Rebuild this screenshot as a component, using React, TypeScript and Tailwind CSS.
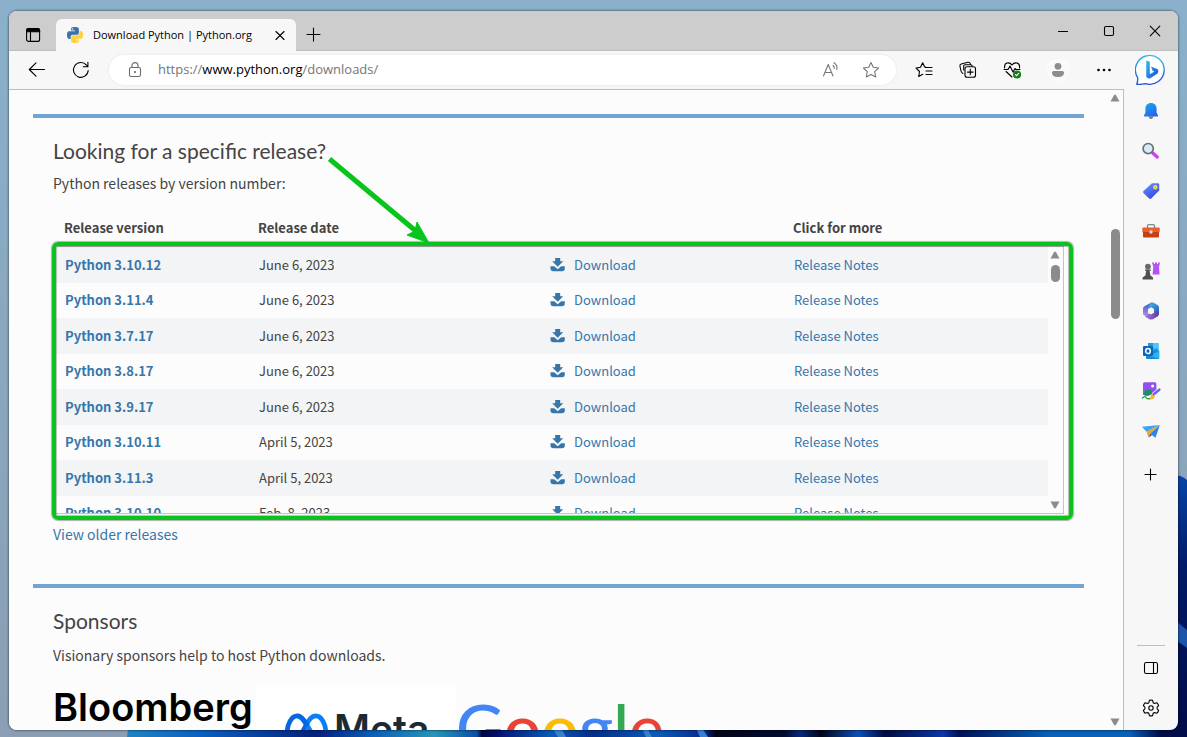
import React from 'react';
import { clsx } from 'clsx';

const releases = [
  { version: 'Python 3.10.12', date: 'June 6, 2023' },
  { version: 'Python 3.11.4', date: 'June 6, 2023' },
  { version: 'Python 3.7.17', date: 'June 6, 2023' },
  { version: 'Python 3.8.17', date: 'June 6, 2023' },
  { version: 'Python 3.9.17', date: 'June 6, 2023' },
  { version: 'Python 3.10.11', date: 'April 5, 2023' },
  { version: 'Python 3.11.3', date: 'April 5, 2023' },
  { version: 'Python 3.10.10', date: 'Feb. 8, 2023' },
];

const COLUMNS = 'grid grid-cols-[194fr_292fr_243fr_265fr] items-center';

/* ---------- Desktop behind the window ---------- */

const Wallpaper: React.FC = () => (
  <svg
    className="absolute inset-0 w-full h-full"
    viewBox="0 0 1187 737"
    preserveAspectRatio="none"
    aria-hidden="true"
  >
    <defs>
      <linearGradient id="sky" x1="0" y1="0" x2="0" y2="1">
        <stop offset="0" stopColor="#8ab0cb" />
        <stop offset="1" stopColor="#8a9fb3" />
      </linearGradient>
      <linearGradient id="bloom" x1="127" x2="1187" y1="0" y2="0" gradientUnits="userSpaceOnUse">
        <stop offset="0" stopColor="#1f84c6" />
        <stop offset="0.07" stopColor="#0a5fc0" />
        <stop offset="0.18" stopColor="#04207c" />
        <stop offset="0.23" stopColor="#0a5cb8" />
        <stop offset="0.29" stopColor="#2896b8" />
        <stop offset="0.33" stopColor="#0b4fa8" />
        <stop offset="0.335" stopColor="#020640" />
        <stop offset="0.35" stopColor="#041070" />
        <stop offset="0.4" stopColor="#0a5cb8" />
        <stop offset="0.44" stopColor="#032c88" />
        <stop offset="0.5" stopColor="#0a5cb8" />
        <stop offset="0.545" stopColor="#082a8c" />
        <stop offset="0.555" stopColor="#020518" />
        <stop offset="0.62" stopColor="#020a30" />
        <stop offset="0.635" stopColor="#072878" />
        <stop offset="0.655" stopColor="#020518" />
        <stop offset="0.69" stopColor="#0c50b8" />
        <stop offset="0.715" stopColor="#020a40" />
        <stop offset="0.77" stopColor="#0a38a8" />
        <stop offset="0.785" stopColor="#021058" />
        <stop offset="0.87" stopColor="#0862b8" />
        <stop offset="0.945" stopColor="#0862b8" />
        <stop offset="0.975" stopColor="#020c48" />
        <stop offset="1" stopColor="#020c48" />
      </linearGradient>
      <linearGradient id="petal" x1="0" y1="0" x2="0" y2="1">
        <stop offset="0" stopColor="#0845a8" />
        <stop offset="0.35" stopColor="#021a68" />
        <stop offset="1" stopColor="#020c48" />
      </linearGradient>
    </defs>
    <rect width="1187" height="737" fill="url(#sky)" />
    <path d="M127 737Q127 731 130 725H1187V737Z" fill="url(#bloom)" />
    <path d="M1170 474Q1182 475 1187 480V737H1170Z" fill="url(#petal)" />
    <path d="M1170 616L1187 630V648L1170 636Z" fill="#1d55ac" />
    <path d="M552 728L558 737H566L561 728ZM642 728L646 737H652L647 728ZM696 728L700 737H708L702 728Z" fill="#3a7fd0" />
  </svg>
);

/* ---------- Browser icons ---------- */

const PythonIcon: React.FC = () => (
  <svg className="w-4 h-4 shrink-0" viewBox="0 0 24 24" aria-hidden="true">
    <path
      fill="#3a73a5"
      d="M14.25.18l.9.2.73.26.59.3.45.32.34.34.25.34.16.33.1.3.04.26.02.2-.01.13V8.5l-.05.63-.13.55-.21.46-.26.38-.3.31-.33.25-.35.19-.35.14-.33.1-.3.07-.26.04-.21.02H8.77l-.69.05-.59.14-.5.22-.41.27-.33.32-.27.35-.2.36-.15.37-.1.35-.07.32-.04.27-.02.21v3.06H3.17l-.21-.03-.28-.07-.32-.12-.35-.18-.36-.26-.36-.36-.35-.46-.32-.59-.28-.73-.21-.88-.14-1.05-.05-1.23.06-1.22.16-1.04.24-.87.32-.71.36-.57.4-.44.42-.33.42-.24.4-.16.36-.1.32-.05.24-.01h.16l.06.01h8.16v-.83H6.18l-.01-2.75-.02-.37.05-.34.11-.31.17-.28.25-.26.31-.23.38-.2.44-.18.51-.15.58-.12.64-.1.71-.06.77-.04.84-.02 1.27.05zm-6.3 1.98l-.23.33-.08.41.08.41.23.34.33.22.41.09.41-.09.33-.22.23-.34.08-.41-.08-.41-.23-.33-.33-.22-.41-.09-.41.09z"
    />
    <path
      fill="#ffd03f"
      d="M21.1 6.11l.28.06.32.12.35.18.36.27.36.35.35.47.32.59.28.73.21.88.14 1.04.05 1.23-.06 1.23-.16 1.04-.24.86-.32.71-.36.57-.4.45-.42.33-.42.24-.4.16-.36.09-.32.05-.24.02-.16-.01h-8.22v.82h5.84l.01 2.76.02.36-.05.34-.11.31-.17.29-.25.25-.31.24-.38.2-.44.17-.51.15-.58.13-.64.09-.71.07-.77.04-.84.01-1.27-.04-1.07-.14-.9-.2-.73-.25-.59-.3-.45-.33-.34-.34-.25-.34-.16-.33-.1-.3-.04-.25-.02-.2.01-.13v-5.34l.05-.64.13-.54.21-.46.26-.38.3-.32.33-.24.35-.2.35-.14.33-.1.3-.06.26-.04.21-.02.13-.01h5.84l.69-.05.59-.14.5-.21.41-.28.33-.32.27-.35.2-.36.15-.36.1-.35.07-.32.04-.28.02-.21V6.07h2.09l.14.01zm-6.47 14.25l-.23.33-.08.41.08.41.23.33.33.23.41.08.41-.08.33-.23.23-.33.08-.41-.08-.41-.23-.33-.33-.23-.41-.08-.41.08z"
    />
  </svg>
);

const Line: React.FC<{ size?: string; children: React.ReactNode; className?: string }> = ({
  size = '0 0 20 20',
  children,
  className = 'w-5 h-5',
}) => (
  <svg
    className={className}
    viewBox={size}
    fill="none"
    stroke="currentColor"
    strokeWidth="1.1"
    strokeLinecap="round"
    strokeLinejoin="round"
    aria-hidden="true"
  >
    {children}
  </svg>
);

const BingIcon: React.FC = () => (
  <svg className="w-8 h-8" viewBox="0 0 32 32" aria-hidden="true">
    <defs>
      <linearGradient id="bingRing" x1="0" y1="0" x2="0" y2="1">
        <stop offset="0" stopColor="#2bbdf0" />
        <stop offset="1" stopColor="#2250cf" />
      </linearGradient>
      <linearGradient id="bingB" x1="0" y1="0" x2="1" y2="1">
        <stop offset="0" stopColor="#2fc0f4" />
        <stop offset="1" stopColor="#1c48dc" />
      </linearGradient>
    </defs>
    <path
      d="M1.8 30.2Q3 27 2.6 23.5A14.4 14.4 0 1 1 10.5 29.6Q6 30.8 1.8 30.2Z"
      fill="#fff"
      stroke="url(#bingRing)"
      strokeWidth="1.4"
      strokeLinejoin="round"
    />
    <path d="M11.2 6.500L14.800 7.800V20.200L19.400 17.600L17.400 16.600L16 12.600L22.800 15.200Q24.400 17.400 22.600 19.600L14.800 24.600Q11.200 24.800 11.200 21.600Z" fill="url(#bingB)" />
  </svg>
);

const BellIcon: React.FC = () => (
  <svg className="w-5 h-5" viewBox="0 0 20 20" aria-hidden="true">
    <defs>
      <linearGradient id="bell" x1="0" y1="0" x2="0.6" y2="1">
        <stop offset="0" stopColor="#14aee8" />
        <stop offset="1" stopColor="#2b62ee" />
      </linearGradient>
    </defs>
    <path d="M7.6 15.6H12.4Q12 18 10 18T7.6 15.6Z" fill="#6d7278" />
    <path d="M10 2C6.6 2 4.4 4.4 4.4 7.6V11.4L3 14.400Q2.8 15.6 3.8 15.6H16.2Q17.2 15.6 17 14.4L15.6 11.4V7.6C15.6 4.4 13.4 2 10 2Z" fill="url(#bell)" />
  </svg>
);

const SearchIcon: React.FC = () => (
  <svg className="w-5 h-5" viewBox="0 0 20 20" aria-hidden="true">
    <path d="M12 12.3L16.200 16" stroke="#c344f2" strokeWidth="3.4" strokeLinecap="round" />
    <circle cx="7.200" cy="7.600" r="5.1" fill="#d4ebfb" stroke="#6a6e73" strokeWidth="1.700" />
  </svg>
);

const TagIcon: React.FC = () => (
  <svg className="w-5 h-5" viewBox="0 0 20 20" aria-hidden="true">
    <defs>
      <linearGradient id="tag" x1="0" y1="0" x2="0.6" y2="1">
        <stop offset="0" stopColor="#5aa0fa" />
        <stop offset="1" stopColor="#3d45e8" />
      </linearGradient>
    </defs>
    <path d="M11 2.3L17 2.2Q18.2 2.2 18.2 3.4V9.4L10.2 17.6Q9.2 18.4 8.2 17.5L2.4 12Q1.6 11 2.5 10.1Z" fill="url(#tag)" />
    <circle cx="14.3" cy="6.2" r="1.5" fill="#8a94e0" stroke="#ffd95a" strokeWidth="1.5" />
  </svg>
);

const ToolboxIcon: React.FC = () => (
  <svg className="w-5 h-5" viewBox="0 0 20 20" aria-hidden="true">
    <path d="M6.5 7V5Q6.5 3.6 8 3.6H12Q13.5 3.6 13.5 5V7" fill="none" stroke="#7f8589" strokeWidth="1.3" />
    <rect x="1.3" y="6.5" width="17.4" height="5" rx="1" fill="#e8602a" />
    <path d="M2 11H18V15.3Q18 16.5 16.8 16.5H3.2Q2 16.5 2 15.3Z" fill="#c43f12" />
    <circle cx="10" cy="11" r="1.7" fill="#d7dde0" />
  </svg>
);

const GamesIcon: React.FC = () => (
  <svg className="w-5 h-5" viewBox="0 0 20 20" aria-hidden="true">
    <path d="M11 1.5H13V3H14V1.5H16V3H17V1.5H19L18 6L18.600 13.5H11.6L12.3 6Z" fill="#b552f2" />
    <circle cx="6.9" cy="5.6" r="2.9" fill="#66696d" />
    <path d="M4 8.4H9.8V9.8H8.6L9.4 14.5L12 16.6V18.5H1.6V16.6L4.4 14.5L5.2 9.8H4Z" fill="#4c4f53" />
  </svg>
);

const Microsoft365Icon: React.FC = () => (
  <svg className="w-5 h-5" viewBox="0 0 20 20" aria-hidden="true">
    <defs>
      <linearGradient id="m365a" x1="0" y1="0" x2="0" y2="1">
        <stop offset="0" stopColor="#2a62c8" />
        <stop offset="1" stopColor="#b58be8" />
      </linearGradient>
      <linearGradient id="m365b" x1="0" y1="0" x2="1" y2="1">
        <stop offset="0" stopColor="#4ab8f0" />
        <stop offset="1" stopColor="#2258bd" />
      </linearGradient>
      <linearGradient id="m365c" x1="0" y1="0" x2="1" y2="0">
        <stop offset="0" stopColor="#a67be0" />
        <stop offset="1" stopColor="#5b3b9a" />
      </linearGradient>
    </defs>
    <path d="M10.5 1.5L3.4 5.3Q2 6.1 2 7.7V12.7Q2.2 14.700 4.5 14.8L7.2 13.3V8.3L12.5 5V2Z" fill="url(#m365a)" />
    <path d="M10.5 1.5Q12 1.3 13.2 2.1L16.8 4.3Q18 5.2 18 6.7V13L12.8 12V8.2L7.2 5.2Z" fill="url(#m365b)" />
    <path d="M4 14.7L12.8 10L18 11.5V13Q18 14.5 16.6 15.4L11.7 18.2Q10 19 8.4 18.2L4.5 15.9Z" fill="url(#m365c)" />
    <path d="M7 8L10 6.2L13 8V11.8L10 13.6L7 11.8Z" fill="#f7f7f7" />
  </svg>
);

const OutlookIcon: React.FC = () => (
  <svg className="w-5 h-5" viewBox="0 0 20 20" aria-hidden="true">
    <rect x="7" y="2" width="10.5" height="11" fill="#1d9be6" />
    <path d="M12 2H17.5V7.5H12Z" fill="#4cc9f4" />
    <path d="M5 10L18.2 9.5V17Q18.2 18 17 18H6Q5 18 5 17Z" fill="#1788d8" />
    <path d="M9 15L18.2 9.8V17.8Z" fill="#2cb2ef" />
    <rect x="2" y="5" width="10" height="10" rx="1" fill="#0a66bc" />
    <ellipse cx="7" cy="10" rx="2.3" ry="2.6" fill="none" stroke="#fff" strokeWidth="1.5" />
  </svg>
);

const ImageCreatorIcon: React.FC = () => (
  <svg className="w-5 h-5" viewBox="0 0 20 20" aria-hidden="true">
    <rect x="2" y="1.3" width="13.4" height="12.7" rx="1.6" fill="#9150ef" />
    <circle cx="11.6" cy="5" r="1.5" fill="#fff" />
    <path d="M2 13.5Q4.5 8 8.5 8.5Q12 9.5 11 13L7 15Q4 15 2 13.5Z" fill="#1b8f5d" />
    <path d="M1.5 17Q4 14.5 5 16.5T9 17.5" fill="none" stroke="#259b62" strokeWidth="1.4" strokeLinecap="round" />
    <path d="M12.5 13.5L18.3 8.7" stroke="#fff" strokeWidth="4" strokeLinecap="round" />
    <path d="M12.5 13.5L18.3 8.7" stroke="#6a63ee" strokeWidth="2.6" strokeLinecap="round" />
    <path d="M11 13L14 15.5Q13 18.8 8.3 18.5Q9.8 17 9.7 15Z" fill="#f7b32a" />
  </svg>
);

const DropIcon: React.FC = () => (
  <svg className="w-5 h-5" viewBox="0 0 20 20" aria-hidden="true">
    <path d="M1 5.8L18.8 4L5.5 10.8Z" fill="#39a5ee" />
    <path d="M5.5 10.5L18.8 4L9.5 12.5L7.3 16.2Z" fill="#f4a42c" />
    <path d="M18.8 4L14.5 16.8L9.2 12.8Z" fill="#2c83e8" />
    <path d="M9.3 12.8L11 14.2L7.3 16.5Z" fill="#1e5cae" />
  </svg>
);

const sidebarApps = [
  { label: 'Notifications', Icon: BellIcon },
  { label: 'Search', Icon: SearchIcon },
  { label: 'Shopping', Icon: TagIcon },
  { label: 'Tools', Icon: ToolboxIcon },
  { label: 'Games', Icon: GamesIcon },
  { label: 'Microsoft 365', Icon: Microsoft365Icon },
  { label: 'Outlook', Icon: OutlookIcon },
  { label: 'Image Creator', Icon: ImageCreatorIcon },
  { label: 'Drop', Icon: DropIcon },
];

const IconButton: React.FC<{ label: string; className: string; children: React.ReactNode }> = ({
  label,
  className,
  children,
}) => (
  <button type="button" aria-label={label} className={clsx('flex items-center justify-center shrink-0', className)}>
    {children}
  </button>
);

/* ---------- Browser chrome ---------- */

const TitleBar: React.FC = () => (
  <header className="h-10 shrink-0 flex items-end bg-[#cdcdcd] shadow-[inset_0_-1px_0_#bebebe]">
    <IconButton label="Tab actions" className="w-[47px] h-8">
      <Line className="w-4 h-4" size="0 0 16 16">
        <rect x="1.6" y="1.6" width="13" height="12.8" rx="2" />
        <path d="M1.6 4.8V3.5Q1.6 1.6 3.5 1.6H12.7Q14.6 1.6 14.6 3.5V4.8Z" fill="currentColor" />
        <path d="M5.5 5V14.4" />
      </Line>
    </IconButton>
    <div className="w-60 h-8 flex items-center pl-[11px] pr-2 rounded-t-md bg-[#f7f7f7]">
      <PythonIcon />
      <span className="ml-[10px] flex-1 text-[11px] text-black whitespace-nowrap">Download Python | Python.org</span>
      <IconButton label="Close tab" className="w-4 h-4">
        <Line className="w-4 h-4" size="0 0 16 16">
          <path d="M4 4.500L12 12.500M12 4.500L4 12.500" />
        </Line>
      </IconButton>
    </div>
    <IconButton label="New tab" className="w-9 h-8">
      <Line className="w-4 h-4" size="0 0 16 16">
        <path d="M7.5 1V14M1 7.5H14" />
      </Line>
    </IconButton>
    <div className="ml-auto flex self-stretch">
      <IconButton label="Minimize" className="w-[46px]">
        <Line className="w-3 h-3" size="0 0 12 12">
          <path d="M1.5 6.5H10.5" />
        </Line>
      </IconButton>
      <IconButton label="Maximize" className="w-[46px]">
        <Line className="w-3 h-3" size="0 0 12 12">
          <rect x="1.5" y="1.5" width="9" height="9" rx="1.5" />
        </Line>
      </IconButton>
      <IconButton label="Close" className="w-[46px]">
        <Line className="w-3 h-3" size="0 0 12 12">
          <path d="M1.200 1.200L10.800 10.800M10.800 1.200L1.200 10.800" />
        </Line>
      </IconButton>
    </div>
  </header>
);

const AddressBar: React.FC = () => (
  <div className="flex-1 h-[30px] mr-1.5 flex items-center rounded-full bg-white shadow-[0_0_3px_rgba(0,0,0,0.08)]">
    <IconButton label="View site information" className="w-[49px] pl-[3px] text-[#6b6b6b]">
      <Line className="w-4 h-4" size="0 0 16 16">
        <rect x="2.5" y="5.5" width="11" height="9" rx="1.8" />
        <path d="M5 5.5V3.6A3 3 0 0 1 11 3.6V5.5" />
        <circle cx="8" cy="10" r="0.5" fill="currentColor" />
      </Line>
    </IconButton>
    <a href="#downloads" className="flex-1 text-[13px] text-[#757575]">
      https://<span className="text-black">www.python.org</span>/downloads/
    </a>
    <IconButton label="Read aloud" className="w-10 text-[#767676]">
      <Line className="w-[18px] h-[18px]" size="0 0 18 18">
        <path d="M1.5 15L6.2 3.500L11 15M3.2 11.500H9.4" />
        <path d="M11 4.5Q12.500 5.800 12.300 7.500M12 1.800Q15.800 4.500 14.800 8.500" />
      </Line>
    </IconButton>
    <IconButton label="Add to favorites" className="w-10 mr-[5px] text-[#767676]">
      <Line className="w-[18px] h-[18px]" size="0 0 18 18">
        <path d="M9 1.5L11.3 6.3L16.6 7L12.7 10.7L13.7 16L9 13.4L4.3 16L5.3 10.7L1.4 7L6.7 6.3Z" />
      </Line>
    </IconButton>
  </div>
);

const Toolbar: React.FC = () => (
  <div className="h-[38px] shrink-0 flex items-center pl-1.5 pr-0.5">
    <IconButton label="Back" className="w-11">
      <Line className="w-[18px] h-[18px]" size="0 0 18 18">
        <path d="M1.5 8.5H16.500M8 1.8L1.3 8.500L8 15.2" />
      </Line>
    </IconButton>
    <IconButton label="Refresh" className="w-11 mr-1.5">
      <Line className="w-[18px] h-[18px]" size="0 0 18 18">
        <path d="M16.2 9.500A7.4 7.4 0 1 1 14.500 4.2L15.8 5.5M15.9 1.2V5.7H11.3" />
      </Line>
    </IconButton>
    <AddressBar />
    <IconButton label="Favorites" className="w-11">
      <Line className="w-[18px] h-[18px]" size="0 0 18 18">
        <path d="M10.5 6L9.700 6L7.7 1.8L5.5 6.3L1 7L4.5 10.500L3.7 15.5L7.8 13.3M10.5 6.5H17M11 10H17M11 13.5H17" />
      </Line>
    </IconButton>
    <IconButton label="Collections" className="w-11">
      <Line className="w-[18px] h-[18px]" size="0 0 18 18">
        <path d="M4 12.5Q2.300 11.500 2 10L0.900 5Q0.700 3.400 2.200 3L9 1.300Q10.800 1 11.400 2.800L11.700 3.700M4.700 9V4.800Q4.800 3.700 6 3.700H11.700Q13.200 3.700 13.200 5" />
        <rect x="6" y="5.8" width="10.5" height="10.5" rx="2" fill="#f7f7f7" />
        <path d="M11.3 8.3V13.8M8.5 11.1H14.1" />
      </Line>
    </IconButton>
    <IconButton label="Browser essentials" className="w-11">
      <Line className="w-[18px] h-[18px]" size="0 0 18 18">
        <path d="M1.7 7Q1 3 4 2Q7 1.3 9 4Q11 1.300 14 2Q17.2 3 16.5 7M3 10.5L9 16" />
        <path d="M1 8.5H5L7 5L10 11L12 7.5L13 8.5H17" />
        <circle cx="14" cy="13.5" r="3.5" fill="#187c1a" stroke="#187c1a" />
        <path d="M12.4 13.6L13.6 14.7L15.7 12.4" stroke="#fff" />
      </Line>
    </IconButton>
    <IconButton label="Profile" className="w-12">
      <svg className="w-6 h-6" viewBox="0 0 24 24" fill="#8d8d8d" aria-hidden="true">
        <circle cx="12" cy="12" r="11.500" fill="#fafafa" />
        <circle cx="12" cy="8.3" r="3.4" />
        <path d="M6 14.5Q6 13 7.500 13H16.5Q18 13 18 14.5Q18 19 12 19T6 14.5Z" />
      </svg>
    </IconButton>
    <IconButton label="Settings and more" className="w-11">
      <svg className="w-4 h-4" viewBox="0 0 16 16" aria-hidden="true">
        <circle cx="2.5" cy="8" r="1.3" />
        <circle cx="8" cy="8" r="1.3" />
        <circle cx="13.5" cy="8" r="1.3" />
      </svg>
    </IconButton>
    <IconButton label="Bing chat" className="w-[50px]">
      <BingIcon />
    </IconButton>
  </div>
);

const Sidebar: React.FC = () => (
  <aside className="w-[54px] shrink-0 flex flex-col items-center py-0.5">
    {sidebarApps.map(({ label, Icon }) => (
      <IconButton key={label} label={label} className="w-10 h-10">
        <Icon />
      </IconButton>
    ))}
    <IconButton label="Customize sidebar" className="w-10 h-10 mt-1">
      <Line className="w-4 h-4" size="0 0 16 16">
        <path d="M7.5 2V13M2 7.5H13" />
      </Line>
    </IconButton>
    <hr className="w-7 mt-auto mb-0.5 border-[#bfbfbf]" />
    <IconButton label="Hide sidebar" className="w-10 h-10">
      <Line className="w-4 h-4" size="0 0 16 16">
        <rect x="1.5" y="2.5" width="13" height="11" rx="1.8" />
        <path d="M10.5 2.5V13.5" />
      </Line>
    </IconButton>
    <IconButton label="Settings" className="w-10 h-10">
      <Line className="w-[18px] h-[18px]" size="0 0 18 18">
        <path d="M7.4 1.3Q9 0.9 10.6 1.3L11.1 3.6Q12 4.600 13.200 4.300L15 3.8Q16.200 5 16.6 6.6L15.200 8.2Q14.700 9 15.200 9.8L16.6 11.4Q16.200 13 15 14.2L13.200 13.700Q12 13.400 11.1 14.4L10.6 16.7Q9 17.1 7.4 16.7L6.9 14.4Q6 13.400 4.800 13.700L3 14.2Q1.800 13 1.4 11.4L2.800 9.8Q3.300 9 2.800 8.2L1.4 6.6Q1.800 5 3 3.8L4.800 4.300Q6 4.600 6.9 3.6Z" />
        <circle cx="9" cy="9" r="2.2" />
      </Line>
    </IconButton>
  </aside>
);

/* ---------- Page content ---------- */

const ScrollArrow: React.FC<{ down?: boolean }> = ({ down }) => (
  <svg className="w-[10px] h-2 shrink-0" viewBox="0 0 10 8" fill="#8b8b8b" aria-hidden="true">
    <path d={down ? 'M0.5 0.5H9.5L6 6.8Q5 8 4 6.8Z' : 'M0.5 7.5H9.5L6 1.2Q5 0 4 1.2Z'} />
  </svg>
);

const DownloadIcon: React.FC = () => (
  <svg className="w-4 h-4 shrink-0" viewBox="0 0 16 16" fill="#3776ab" aria-hidden="true">
    <path d="M5.200 1H10.200V4.2H13.2L7.700 9.700L2.2 4.2H5.2Z" />
    <path d="M0.500 9.200H4.2L7.700 12.200L11.200 9.200H14.800V11.5Q14.8 14.300 12 14.3H3.300Q0.500 14.3 0.5 11.5Z" />
  </svg>
);

const ReleaseTable: React.FC = () => (
  <div className="relative mt-[15px]">
    <table className="block text-[13px] text-[#444]">
      <thead className="block pr-[17px]">
        <tr className={clsx(COLUMNS, 'h-9 text-left')}>
          <th className="pl-[11px]">Release version</th>
          <th className="pl-[11px]">Release date</th>
          <th aria-label="Download" />
          <th className="pl-[11px]">Click for more</th>
        </tr>
      </thead>
      <tbody className="block h-[268px] overflow-hidden pr-[15px] border border-[#c4c4c4]">
        {releases.map((release) => (
          <tr key={release.version} className={clsx(COLUMNS, 'odd:h-9 even:h-[35px] pb-px odd:bg-[#f2f4f6]')}>
            <td className="pl-[11px]">
              <a href="#release" className="font-bold text-[#3776ab]">
                {release.version}
              </a>
            </td>
            <td className="pl-[11px]">{release.date}</td>
            <td className="pl-[10px]">
              <a href="#download" className="flex items-center gap-2 text-[#3776ab]">
                <DownloadIcon />
                Download
              </a>
            </td>
            <td className="pl-[11px]">
              <a href="#notes" className="text-[#3776ab]">
                Release Notes
              </a>
            </td>
          </tr>
        ))}
      </tbody>
    </table>
    {/* Scrollbar of the release list */}
    <div className="absolute top-9 bottom-0 right-1 flex flex-col items-center py-[5px]">
      <ScrollArrow />
      <div className="w-[9px] h-[17px] mt-[6px] mb-auto rounded-full bg-[#8b8b8b]" />
      <ScrollArrow down />
    </div>
    {/* Highlight frame and arrow */}
    <div className="absolute top-8 -bottom-1.5 -left-px -right-[9px] rounded-md border-4 border-[#08c41c] shadow-[0_0_1px_1px_rgba(0,0,0,0.3),inset_0_0_1px_1px_rgba(0,0,0,0.25)]" />
    <svg className="absolute -top-14 left-[272px] w-[108px] h-[94px]" viewBox="0 0 108 94" aria-hidden="true">
      <path d="M4.5 5L92 78" stroke="#08c41c" strokeWidth="5" />
      <path d="M104 89L82 81L90 77L92 68Z" fill="#08c41c" stroke="#08c41c" strokeLinejoin="round" />
    </svg>
  </div>
);

const MetaLogo: React.FC = () => (
  <div className="w-[200px] h-[100px] pt-[19px] pl-7 flex items-start gap-[5px] bg-white">
    <svg className="w-[45px] h-[31px] mt-[9px]" viewBox="0 0 43 30" fill="none" stroke="#0668e1" strokeWidth="4.6" aria-hidden="true">
      <path d="M21.5 11C18 5 15.5 2.8 12.5 2.8C7 2.8 2.8 11 2.8 19C2.8 24 5 27 8.5 27C13 27 16 22 21.5 11" />
      <path stroke="#0a80f8" d="M21.5 11C24.5 5 27.5 2.8 30.5 2.8C36 2.8 40.2 11 40.2 19C40.2 24 38 27 34.5 27C30 27 27 20 21.5 11" />
      <path d="M12.5 2.8C16 2.8 18.500 6 22.500 12.700" />
    </svg>
    <span className="font-['Inter'] text-[39px] leading-[50px] font-semibold text-[#1c2b33]">Meta</span>
  </div>
);

const GoogleLogo: React.FC = () => (
  <div className="font-['Lato'] text-[66px] leading-[84px] font-medium text-[#4285f4]">
    G<span className="text-[#ea4335]">o</span>
    <span className="text-[#fbbc05]">o</span>g<span className="text-[#34a853]">l</span>
    <span className="text-[#ea4335]">e</span>
  </div>
);

const PageContent: React.FC = () => (
  <div className="flex-1 min-w-0 pt-6 pl-6 pr-[23px] font-['Noto_Sans_CJK_SC',sans-serif] text-[#444]">
    <section className="px-5 border-t-4 border-[#73a5d3]">
      <h2 className="mt-[17px] font-['Lato'] text-[21px] leading-8">Looking for a specific release?</h2>
      <p className="mt-1 text-[14px] leading-6">Python releases by version number:</p>
      <ReleaseTable />
      <p className="mt-2 text-[14px] leading-6">
        <a href="#older" className="text-[#3776ab]">
          View older releases
        </a>
      </p>
    </section>
    <section className="mt-[38px] px-5 border-t-4 border-[#73a5d3]">
      <h2 className="mt-[17px] font-['Lato'] text-[21px] leading-8">Sponsors</h2>
      <p className="mt-1.5 text-[14px] leading-6">Visionary sponsors help to host Python downloads.</p>
      <div className="mt-[18px] flex items-start">
        <span className="w-[203px] font-['Inter'] text-[38px] leading-[44px] font-semibold text-black">Bloomberg</span>
        <MetaLogo />
        <GoogleLogo />
      </div>
    </section>
  </div>
);

const App: React.FC = () => (
  <div className="relative h-screen pt-[11px] px-[9px] pb-[7px] overflow-hidden font-['Open_Sans',sans-serif]">
    <Wallpaper />
    <div className="relative h-full flex flex-col overflow-hidden rounded-lg bg-[#f7f7f7] shadow-[0_0_2px_1px_rgba(0,0,0,0.35)]">
      <TitleBar />
      <Toolbar />
      <div className="flex-1 min-h-0 flex">
        <main className="flex-1 min-w-0 flex overflow-hidden border-t border-r border-[#bdbdbd] bg-[#fcfcfc]">
          <PageContent />
          <div className="w-4 shrink-0 flex flex-col items-center py-1">
            <ScrollArrow />
            <div className="w-[9px] h-[90px] mt-[127px] mb-auto rounded-full bg-[#8b8b8b]" />
            <ScrollArrow down />
          </div>
        </main>
        <Sidebar />
      </div>
    </div>
  </div>
);

export default App;
